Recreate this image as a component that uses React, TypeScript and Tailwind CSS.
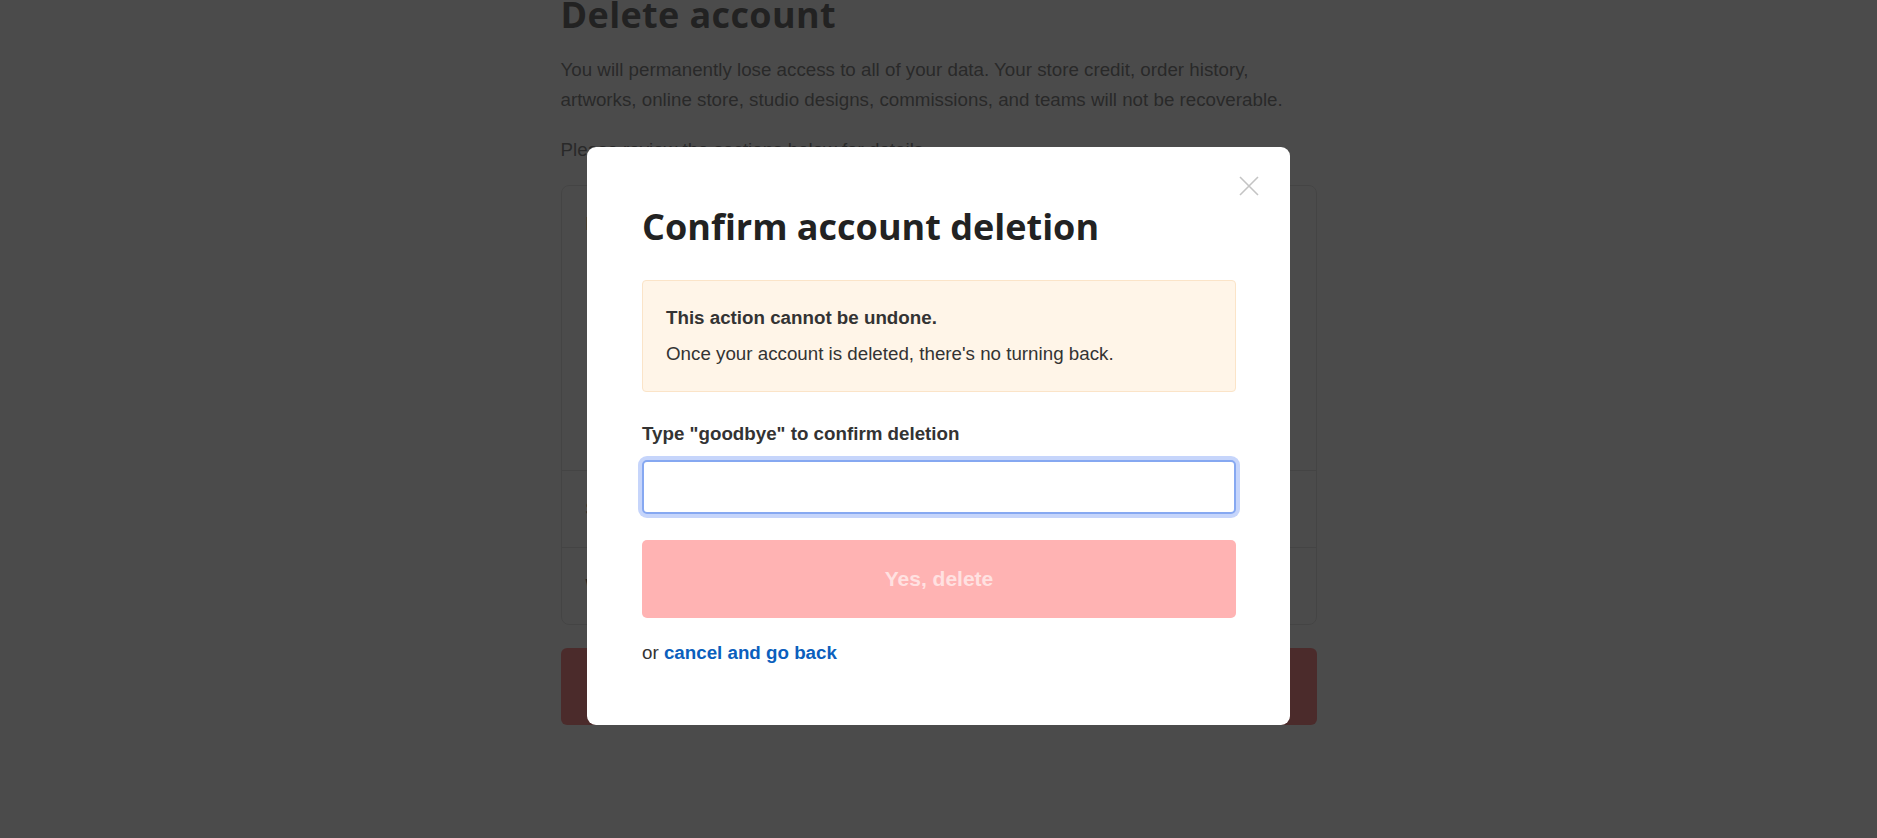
const rows = [
  { title: "Notes before you go", tall: true },
  { title: "Store credit balance", tall: false },
  { title: "Wallet and payouts", tall: false },
];

function CloseIcon() {
  return (
    <svg width="20" height="20" viewBox="0 0 20 20" fill="none">
      <path d="M1 1L19 19M19 1L1 19" stroke="#c4c4c4" strokeWidth="1.6" />
    </svg>
  );
}

function BackgroundPage() {
  return (
    <div className="w-[756px] mx-auto -mt-[7px] font-['Liberation_Sans',Arial,sans-serif]">
      <h1 className="font-['Open_Sans',sans-serif] font-bold text-[36px] leading-[44px] tracking-[0.01em] text-[#333]">
        Delete account
      </h1>
      <p className="mt-[18px] text-[18.75px] leading-[30px] text-[#555]">
        You will permanently lose access to all of your data. Your store credit, order history,
        artworks, online store, studio designs, commissions, and teams will not be recoverable.
      </p>
      <p className="mt-[20px] text-[18.75px] leading-[30px] text-[#555]">
        Please review the sections below for details.
      </p>

      <div className="mt-[20px] border border-[#ddd] rounded-[8px] flex flex-col">
        {rows.map(({ title, tall }, i) => (
          <div
            key={title}
            className={`px-[24px] flex ${tall ? "h-[284px] pt-[24px] items-start" : "h-[77px] items-center"} ${
              i > 0 ? "border-t border-[#ddd]" : ""
            }`}
          >
            <span className="text-[18.75px] leading-[28px] font-bold text-[#333]">{title}</span>
          </div>
        ))}
      </div>

      <button className="mt-[23px] w-full h-[77px] rounded-[6px] bg-[#ff6262] text-white font-bold text-[21px]">
        Delete my account
      </button>
    </div>
  );
}

export default function App() {
  return (
    <div className="relative w-full h-[838px] overflow-hidden bg-white">
      <BackgroundPage />

      <div className="absolute inset-0 bg-[rgba(30,30,30,0.8)] flex justify-center items-start pt-[147px]">
        <div className="relative w-[703px] bg-white rounded-[9px] pt-[58px] pb-[58px] pl-[55px] pr-[54px] font-['Liberation_Sans',Arial,sans-serif]">
          <button className="absolute top-[29px] right-[31px] w-[20px] h-[20px]">
            <CloseIcon />
          </button>

          <h2 className="font-['Open_Sans',sans-serif] font-bold text-[36px] leading-[44px] text-[#222]">
            Confirm account deletion
          </h2>

          <div className="mt-[31px] bg-[#fff5e8] border border-[#fbe4c8] rounded-[4px] px-[23px] pt-[23px] pb-[23px]">
            <p className="text-[18.75px] leading-[28px] font-bold text-[#333]">
              This action cannot be undone.
            </p>
            <p className="mt-[8px] text-[18.75px] leading-[28px] text-[#333]">
              Once your account is deleted, there's no turning back.
            </p>
          </div>

          <label className="block mt-[28px] text-[18.75px] leading-[28px] font-bold text-[#333]">
            Type "goodbye" to confirm deletion
          </label>
          <input
            type="text"
            className="mt-[12px] block w-full h-[54px] rounded-[5px] border-2 border-[#86a8f1] bg-white outline-none shadow-[0_0_0_4px_#c6d5fb] px-3 text-[18.75px]"
          />

          <button
            disabled
            className="mt-[26px] w-full h-[78px] rounded-[5px] bg-[#ffb3b3] text-[#ffe1e1] font-bold text-[21px]"
          >
            Yes, delete
          </button>

          <p className="mt-[21px] text-[18.75px] leading-[28px] text-[#333]">
            or <a className="font-bold text-[#0b5fbd] cursor-pointer">cancel and go back</a>
          </p>
        </div>
      </div>
    </div>
  );
}
